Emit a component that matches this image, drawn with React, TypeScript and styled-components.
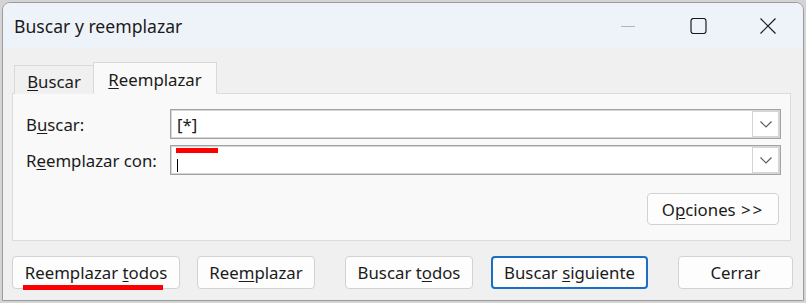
import styled, { createGlobalStyle } from "styled-components";

const GlobalStyle = createGlobalStyle`
  html, body {
    margin: 0;
    padding: 0;
    background: #d4d4d4;
    font-family: "Segoe UI", "Noto Sans", "Open Sans", sans-serif;
    color: #1b1b1b;
  }
`;

// style
const Screen = styled.div`
  padding: 2px;
  width: 806px;
  height: 303px;
  box-sizing: border-box;
`;
const Window = styled.div`
  position: relative;
  width: 802px;
  height: 299px;
  box-sizing: border-box;
  border: 1px solid #9c9c9c;
  border-radius: 8px 8px 0 0;
  background: #f0f0f0;
  overflow: hidden;
  display: flex;
  flex-direction: column;
`;
const TitleBar = styled.div`
  display: flex;
  align-items: center;
  height: 45px;
  background: #eef3fa;
  flex-shrink: 0;
`;
const Title = styled.div`
  flex: 1;
  padding-left: 11px;
  font-size: 17.6px;
`;
const CaptionButton = styled.div`
  width: 70px;
  height: 45px;
  display: flex;
  align-items: center;
  justify-content: center;
`;
const Body = styled.div`
  display: flex;
  flex-direction: column;
  padding: 14px 0 0 9px;
`;
const TabRow = styled.div`
  display: flex;
  align-items: flex-end;
  margin-left: 2px;
  height: 32px;
  position: relative;
  z-index: 1;
  margin-bottom: -1px;
`;
const Tab = styled.div<{ $active?: boolean; $w: number }>`
  width: ${(p) => p.$w}px;
  height: ${(p) => (p.$active ? 32 : 29)}px;
  box-sizing: border-box;
  display: flex;
  align-items: center;
  justify-content: center;
  font-size: 16.8px;
  background: ${(p) => (p.$active ? "#f9f9f9" : "#f0f0f0")};
  border: 1px solid #d9d9d9;
  border-bottom: ${(p) => (p.$active ? "1px solid #f9f9f9" : "none")};
  ${(p) => (p.$active ? "" : "border-right: none;")}
  padding-top: 2px;
`;
const Panel = styled.div`
  width: 779px;
  height: 148px;
  box-sizing: border-box;
  background: #f9f9f9;
  border: 1px solid #dcdcdc;
  padding: 15px 9px 0 13px;
  display: flex;
  flex-direction: column;
`;
const FieldRow = styled.div`
  display: flex;
  align-items: center;
  height: 30px;
  margin-bottom: 6px;
`;
const Label = styled.div`
  width: 144px;
  font-size: 16.8px;
`;
const Combo = styled.div`
  width: 611px;
  height: 30px;
  box-sizing: border-box;
  border: 1px solid #a3a3a3;
  box-shadow: inset 0 0 0 1px #d6d6d6;
  background: #fff;
  display: flex;
  align-items: center;
  padding: 1px 1px 1px 6px;
`;
const ComboText = styled.div`
  flex: 1;
  height: 26px;
  font-size: 16.8px;
  display: flex;
  align-items: center;
`;
const Caret = styled.span`
  display: block;
  width: 1px;
  height: 13px;
  background: #000;
  margin-top: 10px;
`;
const DropButton = styled.div`
  width: 27px;
  height: 26px;
  box-sizing: border-box;
  border: 1px solid #d4d4d4;
  background: #fff;
  display: flex;
  align-items: center;
  justify-content: center;
`;
const OptionsRow = styled.div`
  display: flex;
  justify-content: flex-end;
  padding-right: 2px;
  margin-top: 12px;
`;
const Button = styled.div<{ $w: number; $h?: number; $primary?: boolean; $ml?: number }>`
  width: ${(p) => p.$w}px;
  height: ${(p) => p.$h ?? 33}px;
  margin-left: ${(p) => p.$ml ?? 0}px;
  box-sizing: border-box;
  background: #fdfdfd;
  border: ${(p) => (p.$primary ? "2px solid #1a6fc4" : "1px solid #d2d2d2")};
  border-radius: 4px;
  display: flex;
  align-items: center;
  justify-content: center;
  font-size: 16.8px;
  color: #1b1b1b;
`;
const ButtonRow = styled.div`
  display: flex;
  margin-top: 15px;
`;
const Mark = styled.div<{ $x: number; $y: number; $w: number }>`
  position: absolute;
  left: ${(p) => p.$x}px;
  top: ${(p) => p.$y}px;
  width: ${(p) => p.$w}px;
  height: 5px;
  background: #ff0000;
`;
const U = styled.span`
  text-decoration: underline;
  text-underline-offset: 2px;
  text-decoration-thickness: 1px;
`;
const Arrows = styled.span`
  letter-spacing: 2px;
  margin-left: 1px;
`;

const Chevron = () => (
  <svg width="12" height="7" viewBox="0 0 12 7">
    <polyline points="0.5,0.5 6,6 11.5,0.5" fill="none" stroke="#5c5c5c" strokeWidth="1.2" />
  </svg>
);

const App = () => {
  return (
    <Screen>
      <GlobalStyle />
      <Window>
        <TitleBar>
          <Title>Buscar y reemplazar</Title>
          <CaptionButton>
            <svg width="16" height="16" viewBox="0 0 16 16">
              <line x1="1" y1="8.5" x2="15" y2="8.5" stroke="#b4b4b4" strokeWidth="1" />
            </svg>
          </CaptionButton>
          <CaptionButton>
            <svg width="17" height="16" viewBox="0 0 17 16">
              <rect x="1" y="0.5" width="15" height="15" rx="2.5" fill="none" stroke="#1b1b1b" strokeWidth="1.2" />
            </svg>
          </CaptionButton>
          <CaptionButton>
            <svg width="18" height="16" viewBox="0 0 18 16">
              <path d="M1.5 0.5 L16.5 15.5 M16.5 0.5 L1.5 15.5" stroke="#1b1b1b" strokeWidth="1.2" fill="none" />
            </svg>
          </CaptionButton>
        </TitleBar>
        <Body>
          <TabRow>
            <Tab $w={79}>
              <span>
                <U>B</U>uscar
              </span>
            </Tab>
            <Tab $w={124} $active>
              <span>
                <U>R</U>eemplazar
              </span>
            </Tab>
          </TabRow>
          <Panel>
            <FieldRow>
              <Label>
                B<U>u</U>scar:
              </Label>
              <Combo>
                <ComboText>[*]</ComboText>
                <DropButton>
                  <Chevron />
                </DropButton>
              </Combo>
            </FieldRow>
            <FieldRow>
              <Label>
                R<U>e</U>emplazar con:
              </Label>
              <Combo>
                <ComboText>
                  <Caret />
                </ComboText>
                <DropButton>
                  <Chevron />
                </DropButton>
              </Combo>
            </FieldRow>
            <OptionsRow>
              <Button $w={132} $h={32}>
                <span>
                  O<U>p</U>ciones <Arrows>&gt;&gt;</Arrows>
                </span>
              </Button>
            </OptionsRow>
          </Panel>
          <ButtonRow>
            <Button $w={168}>
              <span>
                Reemplazar <U>t</U>odos
              </span>
            </Button>
            <Button $w={118} $ml={17}>
              <span>
                Ree<U>m</U>plazar
              </span>
            </Button>
            <Button $w={128} $ml={30}>
              <span>
                Buscar t<U>o</U>dos
              </span>
            </Button>
            <Button $w={157} $ml={18} $primary>
              <span>
                Buscar <U>s</U>iguiente
              </span>
            </Button>
            <Button $w={115} $ml={30}>
              Cerrar
            </Button>
          </ButtonRow>
        </Body>
        <Mark $x={173} $y={145} $w={42} />
        <Mark $x={20} $y={282} $w={140} />
      </Window>
    </Screen>
  );
};

export default App;
